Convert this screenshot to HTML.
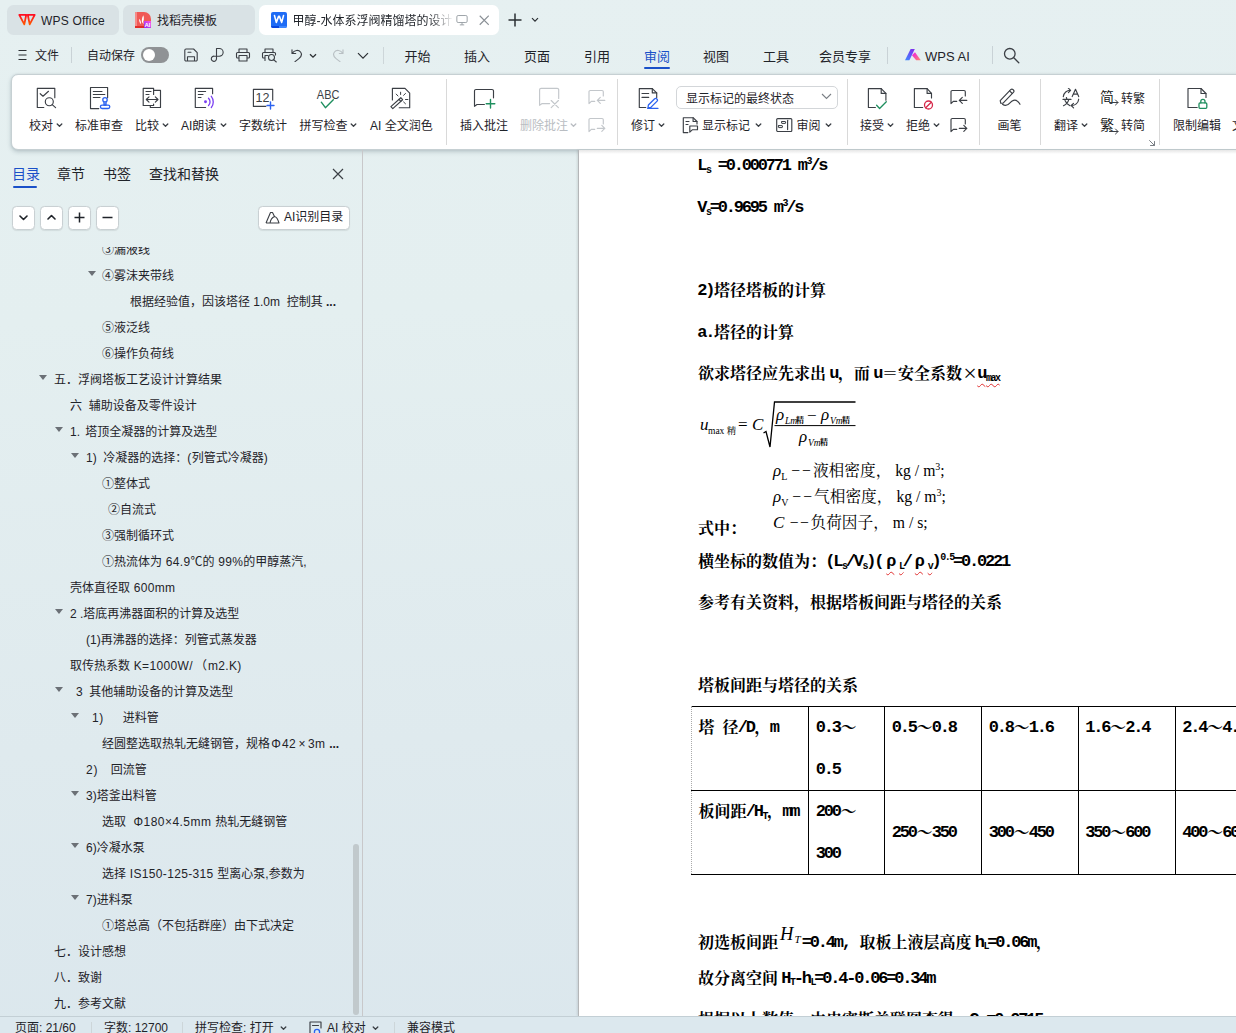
<!DOCTYPE html>
<html lang="zh-CN">
<head>
<meta charset="utf-8">
<title>甲醇-水体系浮阀精馏塔的设计</title>
<style>
*{box-sizing:border-box;margin:0;padding:0}
html,body{width:1236px;height:1033px;overflow:hidden;background:#e3eff1}
body{font-family:"Liberation Sans","Noto Sans CJK SC",sans-serif;font-size:12px;color:#1f2329;position:relative}
.abs{position:absolute}
#app{position:absolute;left:0;top:0;width:1236px;height:1033px;overflow:hidden;background:linear-gradient(178deg,#e6f0f1 0%,#e4eff0 30%,#dfeaee 70%,#dbe7ed 100%)}
/* tabs */
.tab{position:absolute;top:4.500px;height:30.500px;border-radius:6.500px;background:#d9e2e5;font-size:12px;line-height:30px;white-space:nowrap;overflow:hidden}
.tab.on{background:#fff}
/* menu */
.mi{position:absolute;top:46px;height:20px;line-height:20px;font-size:12px;white-space:nowrap}
.mt{position:absolute;top:45.500px;height:22px;line-height:22px;font-size:13px;white-space:nowrap}
/* ribbon */
#ribbon{position:absolute;left:11px;top:74px;width:1240px;height:76px;background:#fff;border:1px solid #c6d0d3;border-radius:7px;box-shadow:0 2px 4px rgba(90,110,120,.30),0 0 2px rgba(120,140,150,.2)}
.rl{position:absolute;top:117px;height:18px;line-height:18px;font-size:12px;white-space:nowrap;color:#1f2329}
.chev{position:absolute;fill:none;stroke:#3b3f45;stroke-width:1.3;stroke-linecap:round;stroke-linejoin:round}
.rsep{position:absolute;top:79px;height:66px;width:1px;background:#d9d9d9}
.ic{position:absolute;fill:none;stroke:#3b3f45;stroke-width:1.15;stroke-linecap:round;stroke-linejoin:round}
/* sidebar */
.stab{position:absolute;top:162.500px;height:22px;line-height:22px;font-size:14px;white-space:nowrap}
.sbtn{position:absolute;top:206px;width:23.500px;height:23.500px;background:#fff;border:1px solid #c9d0d3;border-radius:4.500px;box-shadow:0 .5px 1px rgba(0,0,0,.08)}
.ti{position:absolute;height:26px;line-height:26px;font-size:12px;white-space:pre;color:#1f2329}
.tri{position:absolute;width:0;height:0;border-left:4px solid transparent;border-right:4px solid transparent;border-top:5.500px solid #6b7076}
.la{letter-spacing:.350px}
.fwc{display:inline-block;width:12px;text-align:center}
/* doc */
#page{position:absolute;left:578px;top:150px;width:700px;height:866px;background:#fff;overflow:hidden;border-left:1px solid #b4b6b8;box-shadow:-1px 0 2px rgba(0,0,0,.10)}
#page>*{margin-left:0}
#page:before{content:"";position:absolute;left:0;top:0;width:100%;height:4px;background:linear-gradient(#e6e6e6,#fff)}
.dl{position:absolute;height:42px;line-height:42px;font-size:16px;font-weight:bold;white-space:pre;color:#000;font-family:"Liberation Serif","Noto Serif CJK SC",serif}
.l{font-family:"Liberation Mono","Noto Serif CJK SC",monospace;letter-spacing:-2.2px;font-size:17px;position:relative;left:-.8px;top:-1px}
.sb{font-family:"Liberation Mono",monospace;font-size:10px;letter-spacing:-1.5px;position:relative;top:1.500px}
.sp{font-family:"Liberation Mono",monospace;font-size:10px;letter-spacing:-1.5px;position:relative;top:-7px}
.fw{display:inline-block;width:16px;text-align:center;font-size:24px;line-height:20px;vertical-align:-2px;font-weight:normal}
.sq{text-decoration:underline wavy #e03030 1px;text-underline-offset:4px;text-decoration-skip-ink:none}
.fm{position:absolute;font-family:"Liberation Serif","Noto Serif CJK SC",serif;color:#000;line-height:20px;white-space:nowrap}
.fm .abs{line-height:20px}
.it,.wl i{font-style:italic}
.wl{position:absolute;height:26px;line-height:26px;font-size:15.700px;white-space:pre;color:#000;font-family:"Liberation Serif","Noto Serif CJK SC",serif}
.wl i{font-size:17px}
.wsb{font-size:10px;position:relative;top:4px}
.wsp{font-size:10px;position:relative;top:-6px}
.ht{font-family:"Liberation Serif",serif;font-weight:normal;font-size:18.500px;position:relative;top:-8px;margin:0 2px 0 2px}
.hts{font-size:11px;font-style:italic;position:relative;top:3.500px;margin-left:1px}
/* status */
#status{position:absolute;left:0;top:1016px;width:1236px;height:17px;background:#dce8ee;border-top:1px solid #c3cfd5}
.st{position:absolute;top:1019px;height:18px;line-height:18px;font-size:12px;white-space:nowrap}
</style>
</head>
<body>
<div id="app">
<!-- TABS -->
<div class="tab" style="left:7px;width:112px">
<svg class="abs" style="left:11px;top:8.500px" width="18" height="13" viewBox="0 0 18 13"><defs><linearGradient id="gw" x1="0" y1="0" x2="0" y2="1"><stop offset="0" stop-color="#ff0d22"/><stop offset="1" stop-color="#ff5a00"/></linearGradient></defs><path d="M1.300 1.900L6.300 11.400 8.200 1.900ZM16.700 1.900L11.700 11.400 9.800 1.900Z" fill="none" stroke="url(#gw)" stroke-width="1.800" stroke-linejoin="round"/></svg>
<span class="abs" style="left:34px;top:1px;letter-spacing:.200px">WPS Office</span></div>
<div class="tab" style="left:123px;width:132px">
<svg class="abs" style="left:12px;top:7.500px" width="16" height="16" viewBox="0 0 16 16"><defs><linearGradient id="gb" x1="0" y1="1" x2="1" y2="0"><stop offset="0" stop-color="#8a2cf0"/><stop offset="1" stop-color="#ff52e6"/></linearGradient></defs><path d="M0 0h9a7 7 0 0 1 7 7v9h-16z" fill="#f05956"/><rect width="2" height="16" fill="#f58b89"/><rect y="14" width="16" height="2" fill="#e22c29"/><path d="M8.300 3.200c1.100 2.600.600 5.800-.900 8.300-1-2.600-.600-5.700.900-8.300zM4.200 6.800c1.400 1.500 2 3.500 1.700 5.400-1.300-1.300-2-3.300-1.700-5.400zM7.800 12.300c.4-1.500 1.400-2.700 2.800-3.300" fill="#fff"/><rect x="9" y="9" width="7" height="7" fill="url(#gb)"/><text x="12.500" y="14.800" font-size="6" font-weight="bold" fill="#fff" text-anchor="middle" font-family="Liberation Sans,sans-serif">AI</text></svg>
<span class="abs" style="left:34px;top:1px">找稻壳模板</span></div>
<div class="tab on" style="left:259px;width:240px">
<svg class="abs" style="left:12px;top:7.500px" width="16" height="16" viewBox="0 0 16 16"><defs><clipPath id="cw"><rect width="16" height="16" rx="2"/></clipPath></defs><g clip-path="url(#cw)"><rect width="16" height="16" fill="#1f6cf5"/><rect y="14" width="8" height="2" fill="#0a47df"/><rect x="8" y="14" width="8" height="2" fill="#3d86ff"/></g><path d="M3.500 3.600l1.800 6.800 2.300-6h.8l2.300 6 1.800-6.800" fill="none" stroke="#fff" stroke-width="1.600" stroke-linejoin="round" stroke-linecap="round"/></svg>
<span class="abs" style="left:33.500px;top:1px;width:163px;overflow:hidden;-webkit-mask-image:linear-gradient(90deg,#000 136px,transparent 160px);mask-image:linear-gradient(90deg,#000 136px,transparent 160px)">甲醇-水体系浮阀精馏塔的设计计算</span>
<svg class="abs" style="left:196.500px;top:10.800px" width="12" height="10.500" viewBox="0 0 13 12"><rect x=".6" y=".6" width="11.800" height="8" rx="1.500" fill="none" stroke="#9aa0a6" stroke-width="1.100"/><path d="M4 11.300h5M6.500 8.600v2.700" stroke="#9aa0a6" stroke-width="1.100" fill="none"/></svg>
<svg class="abs" style="left:219.500px;top:10.800px" width="10.500" height="10.500" viewBox="0 0 10 10"><path d="M.7.7l8.600 8.600M9.300.7l-8.600 8.600" stroke="#8a9096" stroke-width="1.100" fill="none"/></svg>
</div>
<svg class="abs" style="left:508px;top:13px" width="14" height="14" viewBox="0 0 14 14"><path d="M7 .5v13M.5 7h13" stroke="#2b2f33" stroke-width="1.500" fill="none"/></svg>
<svg class="abs" style="left:531px;top:17px" width="8" height="6" viewBox="0 0 8 6"><path d="M1 1.200l3 3 3-3" stroke="#2b2f33" stroke-width="1.200" fill="none"/></svg>
<!-- MENU ROW -->
<svg class="abs" style="left:18px;top:49px" width="9" height="12" viewBox="0 0 9 12"><path d="M.5 1.500h8M.5 6h8M.5 10.500h8" stroke="#2b2f33" stroke-width="1.100" fill="none"/></svg>
<span class="mi" style="left:35px">文件</span>
<div class="abs" style="left:71px;top:47px;width:1px;height:16px;background:#c9d2d6"></div>
<span class="mi" style="left:87px">自动保存</span>
<div class="abs" style="left:141px;top:47px;width:28px;height:16px;border-radius:8px;background:#8f9295"><div class="abs" style="left:2px;top:2px;width:12px;height:12px;border-radius:6px;background:#fff"></div></div>
<!-- quick icons -->
<svg class="ic" style="left:183px;top:47px;stroke-width:1.100" width="16" height="16" viewBox="0 0 16 16"><path d="M1.800 3.200a1.200 1.200 0 0 1 1.200-1.200h7.600l3.600 3.600v7.200a1.200 1.200 0 0 1-1.200 1.200h-10a1.200 1.200 0 0 1-1.200-1.200zM4.500 14v-4.300h7v4.300M5 5.200h3"/></svg>
<svg class="ic" style="left:209px;top:47px;stroke-width:1.100" width="16" height="16" viewBox="0 0 16 16"><path d="M7.500 9.200v-7.700h2.800a3.850 3.850 0 0 1 0 7.700h-5a2.600 2.600 0 1 0 2.200 2.600v-2.600"/></svg>
<svg class="ic" style="left:235px;top:47px;stroke-width:1.100" width="16" height="16" viewBox="0 0 16 16"><path d="M4 5.500v-3.500h8v3.500M4 11h-1.500a1 1 0 0 1-1-1v-3.500a1 1 0 0 1 1-1h11a1 1 0 0 1 1 1v3.500a1 1 0 0 1-1 1h-1.500M4 8.500h8v5.500h-8z"/></svg>
<svg class="ic" style="left:261px;top:47px;stroke-width:1.100" width="17" height="16" viewBox="0 0 17 16"><path d="M4 5.500v-3.500h8v3.500M4 11h-1.500a1 1 0 0 1-1-1v-3.500a1 1 0 0 1 1-1h11a1 1 0 0 1 1 1v1.500M4 13.500v-5h3"/><circle cx="10.500" cy="10.500" r="3"/><path d="M12.800 12.800l2.500 2.200"/></svg>
<svg class="ic" style="left:290px;top:48px;stroke-width:1.150" width="14" height="14" viewBox="0 0 14 14"><path d="M2 1.800v3.700h3.700M2.300 5.300c2-3.300 6.300-3.800 8.200-1.300 1.800 2.400.5 5-1.600 6.600l-3.900 3"/></svg>
<svg class="abs" style="left:309px;top:53px" width="8" height="6" viewBox="0 0 8 6"><path d="M1 1.200l3 3 3-3" stroke="#2b2f33" stroke-width="1.300" fill="none"/></svg>
<svg class="ic" style="left:331px;top:48px;stroke:#b9c0c4;stroke-width:1.150" width="14" height="14" viewBox="0 0 14 14"><path d="M12 1.800v3.700h-3.700M11.700 5.300c-2-3.300-6.300-3.800-8.200-1.300-1.800 2.400-.5 5 1.600 6.600l3.900 3"/></svg>
<svg class="abs" style="left:357px;top:52px" width="12" height="8" viewBox="0 0 12 8"><path d="M1 1.200l5 5 5-5" stroke="#2b2f33" stroke-width="1.200" fill="none"/></svg>
<div class="abs" style="left:383px;top:47px;width:1px;height:17px;background:#cdd6d9"></div>
<span class="mt" style="left:404.500px">开始</span>
<span class="mt" style="left:464px">插入</span>
<span class="mt" style="left:524px">页面</span>
<span class="mt" style="left:584px">引用</span>
<span class="mt" style="left:644px;color:#1a50c8">审阅</span>
<div class="abs" style="left:644px;top:66.500px;width:26px;height:2px;border-radius:1px;background:#1a50c8"></div>
<span class="mt" style="left:703px">视图</span>
<span class="mt" style="left:763px">工具</span>
<span class="mt" style="left:819px">会员专享</span>
<div class="abs" style="left:887px;top:47px;width:1px;height:17px;background:#c9d2d6"></div>
<svg class="abs" style="left:905px;top:48.800px" width="17" height="12" viewBox="0 0 17 12"><defs><linearGradient id="g1" x1="0" y1="1" x2=".6" y2="0"><stop offset="0" stop-color="#3d8bff"/><stop offset="1" stop-color="#7a35f0"/></linearGradient><linearGradient id="g2" x1="0" y1="0" x2="1" y2="1"><stop offset="0" stop-color="#f018e8"/><stop offset="1" stop-color="#ff8a6a"/></linearGradient></defs><path d="M0 11.200h4.400l5.400-11.200h-4.200z" fill="url(#g1)"/><path d="M7 6.200l3-3 5.800 8h-4.600z" fill="url(#g2)"/></svg>
<span class="mt" style="left:925px">WPS AI</span>
<div class="abs" style="left:992px;top:46px;width:1px;height:18px;background:#c9d2d6"></div>
<svg class="ic" style="left:1003px;top:47px;stroke-width:1.300" width="17" height="17" viewBox="0 0 17 17"><circle cx="6.800" cy="6.800" r="5.300"/><path d="M10.800 10.800l5 5"/></svg>
<!-- RIBBON -->
<div id="ribbon"></div>
<!-- 校对 -->
<svg class="ic" style="left:36px;top:87px" width="22" height="22" viewBox="0 0 22 22"><path d="M18.800 10.700v-9.300h-17.500v19.100h6.500"/><path d="M4.200 6.700l2.800 2.500 5.500-4.900"/><circle cx="13.300" cy="14.700" r="4"/><path d="M16.200 17.600l3.400 3"/></svg>
<span class="rl" style="left:29px">校对</span><svg class="chev" style="left:56px;top:123px" width="7" height="5" viewBox="0 0 7 5"><path d="M1.200 1l2.300 2.300 2.300-2.300"/></svg>
<!-- 标准审查 -->
<svg class="ic" style="left:89px;top:86px" width="23" height="24" viewBox="0 0 23 24"><path d="M18.600 11.700v-10.200h-17.100v21.100h8.300"/><path d="M4.300 5.500h8.700M4.300 8.500h11.500M4.300 11.500h6.700"/><g stroke="#2b62f0" stroke-width="1.300"><circle cx="16" cy="13.800" r="2.200"/><path d="M15 15.800v3.400h2v-3.400" fill="#9db6f5"/><rect x="11.400" y="19.200" width="9.400" height="3.300" rx="1.650"/></g></svg>
<span class="rl" style="left:75px">标准审查</span>
<!-- 比较 -->
<svg class="ic" style="left:142px;top:87px" width="21" height="22" viewBox="0 0 21 22"><path d="M11.600 7.400v-6h-10.400v17.100h10.400v-1.500"/><path d="M11.600 3.400h6.900v17.100h-10.200v-2"/><path d="M4 4.500h5M4 7.500h3"/><path d="M4.300 12.500h11.700M7 9.800l-2.700 2.700 2.700 2.700M13.300 9.800l2.700 2.700-2.700 2.700"/></svg>
<span class="rl" style="left:135px">比较</span><svg class="chev" style="left:162px;top:123px" width="7" height="5" viewBox="0 0 7 5"><path d="M1.200 1l2.300 2.300 2.300-2.300"/></svg>
<!-- AI朗读 -->
<svg class="ic" style="left:194px;top:87px" width="23" height="22" viewBox="0 0 23 22"><path d="M18.600 6.700v-5.300h-17.300v19.100h10.300"/><path d="M4.300 4.500h7.300M4.300 7.500h4.700M4.300 10.500h2.700"/><g stroke="#7a3ff2" stroke-width="1.300"><circle cx="11.500" cy="14.700" r=".8" fill="#7a3ff2"/><path d="M14.500 11.300a5 5 0 0 1 0 7.200M17.300 9.300a9 9 0 0 1 0 11.200"/></g></svg>
<span class="rl" style="left:181px">AI朗读</span><svg class="chev" style="left:220px;top:123px" width="7" height="5" viewBox="0 0 7 5"><path d="M1.200 1l2.300 2.300 2.300-2.300"/></svg>
<!-- 字数统计 -->
<svg class="ic" style="left:252px;top:88px" width="24" height="22" viewBox="0 0 24 22"><path d="M20.700 12.200v-10.900h-19.300v17.100h12.400"/><g stroke="#2b62f0" stroke-width="1.400"><path d="M18.500 14v7M15 17.500h7"/></g><text x="3.400" y="13.800" font-size="13" stroke="none" fill="#3b3f45" font-family="Liberation Sans,sans-serif" textLength="14" lengthAdjust="spacingAndGlyphs">12</text></svg>
<span class="rl" style="left:239px">字数统计</span>
<!-- 拼写检查 -->
<svg class="ic" style="left:314px;top:86px" width="28" height="24" viewBox="0 0 28 24"><text x="14.100" y="12.700" font-size="13.500" text-anchor="middle" stroke="none" fill="#3b3f45" font-family="Liberation Sans,sans-serif" textLength="22.500" lengthAdjust="spacingAndGlyphs">ABC</text><path d="M7.300 16.200l4.100 5.500 7.900-7.900" stroke="#1f8f5f" stroke-width="1.400"/></svg>
<span class="rl" style="left:299.500px">拼写检查</span><svg class="chev" style="left:350px;top:123px" width="7" height="5" viewBox="0 0 7 5"><path d="M1.200 1l2.300 2.300 2.300-2.300"/></svg>
<!-- AI 全文润色 -->
<svg class="ic" style="left:389px;top:86px" width="24" height="24" viewBox="0 0 24 24"><path d="M3.400 14v-11.700h12.600l4.700 4.900v14.500h-10.500"/><path d="M1.900 20.600l9.900-8.900 1.800 2-9.800 8.900z"/><path d="M10 13.400l1.800 2"/><path d="M11.600 6.200v2.300M7.200 8.100l1.800 1.900M14.600 9.300l1.900-1.800M16.500 13.500h2.400M14.600 16l1.900 1.800" stroke-width="1"/></svg>
<span class="rl" style="left:370px">AI 全文润色</span>
<div class="rsep" style="left:446px"></div>
<!-- 插入批注 -->
<svg class="ic" style="left:473px;top:88px" width="24" height="22" viewBox="0 0 24 22"><path d="M20.500 9.800v-6.800a1.500 1.500 0 0 0-1.500-1.500h-16a1.500 1.500 0 0 0-1.500 1.500v15.300l2.500-1.800h7.400"/><g stroke="#1f8f5f" stroke-width="1.400"><path d="M17.500 11.500v8.600M13.200 15.800h8.600"/></g></svg>
<span class="rl" style="left:460px">插入批注</span>
<!-- 删除批注 -->
<svg class="ic" style="left:538px;top:87px;stroke:#c3c7cb" width="24" height="22" viewBox="0 0 24 22"><path d="M20.700 11.400v-8.600a1.500 1.500 0 0 0-1.500-1.500h-16.100a1.500 1.500 0 0 0-1.500 1.500v15.500l2.500-1.700h7.500"/><path d="M13.200 13.500l7.200 7.200M20.400 13.500l-7.200 7.200"/></svg>
<span class="rl" style="left:520px;color:#b9bdc2">删除批注</span><svg class="chev" style="left:570px;top:123px;stroke:#b9bdc2" width="7" height="5" viewBox="0 0 7 5"><path d="M1.200 1l2.300 2.300 2.300-2.300"/></svg>
<svg class="ic" style="left:588px;top:89px;stroke:#c3c7cb" width="18" height="16" viewBox="0 0 18 16"><path d="M15.300 7v-4.200a1.300 1.300 0 0 0-1.300-1.300h-11.700a1.300 1.300 0 0 0-1.300 1.300v11.800l2.300-2.200h3.400"/><path d="M16.800 11.400h-7.500M12.300 8.400l-3 3 3 3"/></svg>
<svg class="ic" style="left:588px;top:117px;stroke:#c3c7cb" width="18" height="16" viewBox="0 0 18 16"><path d="M15.300 7v-4.200a1.300 1.300 0 0 0-1.300-1.300h-11.700a1.300 1.300 0 0 0-1.300 1.300v11.800l2.300-2.200h3.400"/><path d="M9.300 11.400h7.500M13.800 8.400l3 3-3 3"/></svg>
<div class="rsep" style="left:617px"></div>
<!-- 修订 -->
<svg class="ic" style="left:638px;top:87px" width="24" height="23" viewBox="0 0 24 23"><path d="M18.700 10.700v-4.800l-4.400-4.300h-13v18.900h6.500"/><path d="M14.300 1.600v4.300h4.400"/><path d="M4 6.500h6.700M4 10.400h6.700"/><g stroke="#2b62f0" stroke-width="1.300"><path d="M10 20.600l.4-2.600 6.300-6.300a1.300 1.300 0 0 1 1.900 0l.5.500a1.300 1.300 0 0 1 0 1.900l-6.300 6.300zM9.600 21.300h10.400"/></g></svg>
<span class="rl" style="left:631px">修订</span><svg class="chev" style="left:658px;top:123px" width="7" height="5" viewBox="0 0 7 5"><path d="M1.200 1l2.300 2.300 2.300-2.300"/></svg>
<!-- dropdown -->
<div class="abs" style="left:676px;top:85.500px;width:162px;height:23px;border:1px solid #d3d6d9;border-radius:5px;background:#fff"></div>
<span class="rl" style="left:686px;top:89.500px">显示标记的最终状态</span>
<svg class="abs" style="left:821px;top:93px" width="11" height="7" viewBox="0 0 11 7"><path d="M1 1l4.500 4.500 4.500-4.500" stroke="#7a7f85" stroke-width="1.100" fill="none"/></svg>
<!-- 显示标记 -->
<svg class="ic" style="left:682px;top:116px" width="17" height="18" viewBox="0 0 17 18"><path d="M15 8v-2.500l-3.900-3.800h-9.800v14.900h4.600"/><path d="M11.100 1.700v3.800h3.900"/><path d="M4 5.500h3M4 8.500h2"/><path d="M7.800 10h7.700v3.700h-5l-2.700 2.500z"/></svg>
<span class="rl" style="left:702px">显示标记</span><svg class="chev" style="left:755px;top:123px" width="7" height="5" viewBox="0 0 7 5"><path d="M1.200 1l2.300 2.300 2.300-2.300"/></svg>
<!-- 审阅 -->
<svg class="ic" style="left:776px;top:118px" width="17" height="14" viewBox="0 0 17 14"><rect x=".7" y=".6" width="15.100" height="12.900" rx="1"/><path d="M11.600 2.200v9.400"/><rect x="5.600" y="3.500" width="4" height="1.900" rx=".4" stroke-width="1"/><rect x="2.400" y="7.600" width="4" height="2" rx=".4" stroke-width="1"/></svg>
<span class="rl" style="left:796.500px">审阅</span><svg class="chev" style="left:825px;top:123px" width="7" height="5" viewBox="0 0 7 5"><path d="M1.200 1l2.300 2.300 2.300-2.300"/></svg>
<div class="rsep" style="left:847px"></div>
<!-- 接受 -->
<svg class="ic" style="left:867px;top:87px" width="22" height="23" viewBox="0 0 22 23"><path d="M18.900 13.200v-6.800l-4.700-4.800h-12.800v18.900h7"/><path d="M14.200 1.600v4.800h4.700"/><path d="M9.600 18.300l3 3.200 6.700-6.800" stroke="#1f8f5f" stroke-width="1.300"/></svg>
<span class="rl" style="left:860px">接受</span><svg class="chev" style="left:887px;top:123px" width="7" height="5" viewBox="0 0 7 5"><path d="M1.200 1l2.300 2.300 2.300-2.300"/></svg>
<!-- 拒绝 -->
<svg class="ic" style="left:913px;top:87px" width="23" height="23" viewBox="0 0 23 23"><path d="M18.500 11v-4.600l-4.400-4.800h-12.700v18.900h8.300"/><path d="M14.100 1.600v4.800h4.400"/><g stroke="#d6284a" stroke-width="1.300"><circle cx="15.500" cy="18" r="4"/><path d="M12.700 20.800l5.600-5.600"/></g></svg>
<span class="rl" style="left:906px">拒绝</span><svg class="chev" style="left:933px;top:123px" width="7" height="5" viewBox="0 0 7 5"><path d="M1.200 1l2.300 2.300 2.300-2.300"/></svg>
<svg class="ic" style="left:950px;top:89px" width="18" height="16" viewBox="0 0 18 16"><path d="M15.300 7v-4.200a1.300 1.300 0 0 0-1.300-1.300h-11.700a1.300 1.300 0 0 0-1.300 1.300v11.800l2.300-2.200h3.400"/><path d="M16.800 11.400h-7.500M12.300 8.400l-3 3 3 3"/></svg>
<svg class="ic" style="left:950px;top:117px" width="18" height="16" viewBox="0 0 18 16"><path d="M15.300 7v-4.200a1.300 1.300 0 0 0-1.300-1.300h-11.700a1.300 1.300 0 0 0-1.300 1.300v11.800l2.300-2.200h3.400"/><path d="M9.300 11.400h7.500M13.800 8.400l3 3-3 3"/></svg>
<div class="rsep" style="left:979px"></div>
<!-- 画笔 -->
<svg class="ic" style="left:996px;top:88px" width="27" height="22" viewBox="0 0 27 22"><path d="M4.800 15.300l-.6-2.600 10.500-11a1.700 1.700 0 0 1 2.400 0l.3.300a1.700 1.700 0 0 1 0 2.400l-10.300 10.700z"/><path d="M13.600 2.800l2.700 2.700"/><path d="M6.500 16.300c2.500 1.800 5.500.8 7.500-1.500s5-3.800 7.500-1.500q1.500 1.200 2.500 3"/></svg>
<span class="rl" style="left:997.500px">画笔</span>
<div class="rsep" style="left:1040px"></div>
<!-- 翻译 -->
<svg class="ic" style="left:1061px;top:88px" width="20" height="22" viewBox="0 0 20 22"><path d="M2.300 8.600a7 7 0 0 1 7.300-6.300M7.400.2l2.200 2.100-2.200 2.300"/><path d="M11.200 8.600l3.300-7.300 3.200 7.300M12.300 6.100h4.400"/><path d="M5.400 9.500l.4 1.200M2 11.400h8M7.800 11.600c-.8 2.900-2.800 4.900-5.300 6.100M4 12.500c1 2.500 3 4.300 5 5.200"/><path d="M17.700 11.200a7 7 0 0 1-7.500 6.300M12.500 15.400l-2.300 2.100 2.400 2.300"/></svg>
<span class="rl" style="left:1054px">翻译</span><svg class="chev" style="left:1081px;top:123px" width="7" height="5" viewBox="0 0 7 5"><path d="M1.200 1l2.300 2.300 2.300-2.300"/></svg>
<!-- 简转繁 -->
<span class="rl" style="left:1100px;top:87.500px;font-size:14px;color:#111;font-weight:350">简</span><svg class="ic" style="left:1109px;top:99px;stroke-width:1" width="10" height="7" viewBox="0 0 10 7"><path d="M.5 3.500h8.500M6.500 1l2.500 2.500-2.500 2.500"/></svg>
<span class="rl" style="left:1121px;top:89.500px">转繁</span>
<span class="rl" style="left:1100px;top:116px;font-size:14px;color:#111;font-weight:350">繁</span><svg class="ic" style="left:1109px;top:127.500px;stroke-width:1" width="10" height="7" viewBox="0 0 10 7"><path d="M.5 3.500h8.500M6.500 1l2.500 2.500-2.500 2.500"/></svg>
<span class="rl" style="left:1121px;top:117px">转简</span>
<svg class="ic" style="left:1149px;top:140px;stroke:#7a7f85;stroke-width:1" width="6" height="6" viewBox="0 0 6 6"><path d="M.5.500l5 5M5.500 1.500v4h-4"/></svg>
<div class="rsep" style="left:1159px"></div>
<!-- 限制编辑 -->
<svg class="ic" style="left:1187px;top:87px" width="23" height="23" viewBox="0 0 23 23"><path d="M19 10.500v-4l-5-5h-13v19h9.200"/><path d="M14 1.500v5h5"/><g stroke="#1f8f5f" stroke-width="1.300"><rect x="12" y="15.900" width="7.800" height="5.400" rx="1"/><path d="M13.800 15.900v-1.500a2.100 2.100 0 0 1 4.200 0v1.500"/></g></svg>
<span class="rl" style="left:1173px">限制编辑</span>
<span class="rl" style="left:1232px">文档权限</span>
<!-- SIDEBAR -->
<div class="abs" style="left:362px;top:150px;width:1px;height:868px;background:#c8c8ca"></div>
<span class="stab" style="left:12px;color:#1a50c8">目录</span>
<div class="abs" style="left:13px;top:185.500px;width:24px;height:2.500px;border-radius:1.200px;background:#1a50c8"></div>
<span class="stab" style="left:57px">章节</span>
<span class="stab" style="left:103px">书签</span>
<span class="stab" style="left:149px">查找和替换</span>
<svg class="abs" style="left:332px;top:168px" width="12" height="12" viewBox="0 0 12 12"><path d="M1 1l10 10M11 1l-10 10" stroke="#3b3f45" stroke-width="1.200" fill="none"/></svg>
<div class="sbtn" style="left:11.5px"><svg class="abs" style="left:6px;top:8px" width="9" height="6" viewBox="0 0 9 6"><path d="M1 1l3.500 3.500 3.500-3.500" stroke="#1f2329" stroke-width="1.600" fill="none" stroke-linecap="round" stroke-linejoin="round"/></svg></div>
<div class="sbtn" style="left:39.5px"><svg class="abs" style="left:6px;top:7px" width="9" height="6" viewBox="0 0 9 6"><path d="M1 5l3.500-3.500 3.500 3.500" stroke="#1f2329" stroke-width="1.600" fill="none" stroke-linecap="round" stroke-linejoin="round"/></svg></div>
<div class="sbtn" style="left:67.5px"><svg class="abs" style="left:5px;top:5px" width="11" height="11" viewBox="0 0 11 11"><path d="M5.500 .5v10M.5 5.500h10" stroke="#1f2329" stroke-width="1.500" fill="none"/></svg></div>
<div class="sbtn" style="left:95.5px"><svg class="abs" style="left:5px;top:5px" width="11" height="11" viewBox="0 0 11 11"><path d="M.5 5.500h10" stroke="#1f2329" stroke-width="1.500" fill="none"/></svg></div>
<div class="sbtn" style="left:258px;width:92px"><svg class="abs" style="left:6px;top:4px" width="15" height="13" viewBox="0 0 15 13"><path d="M1 12l4.500-10.500h2l2 4M9.500 5.500c2 .5 3.500 3 4.500 6.500h-13M5 12c.5-3 2-5.500 4.500-6.500" stroke="#3b3f45" stroke-width="1.100" fill="none" stroke-linejoin="round"/></svg><span class="abs" style="left:25px;top:0;line-height:21px;font-size:12px;white-space:nowrap">AI识别目录</span></div>
<div class="abs" style="left:0;top:246.500px;width:352px;height:769.500px;overflow:hidden">
<span class="ti" style="left:102px;top:-10.0px">③漏液线</span>
<span class="ti" style="left:102px;top:16.0px">④雾沫夹带线</span>
<i class="tri" style="left:88px;top:24.2px"></i>
<span class="ti" style="left:130px;top:42.0px">根据经验值，因该塔径 1.0m  控制其 <b>...</b></span>
<span class="ti" style="left:102px;top:68.0px">⑤液泛线</span>
<span class="ti" style="left:102px;top:94.0px">⑥操作负荷线</span>
<span class="ti" style="left:54px;top:120.0px">五．浮阀塔板工艺设计计算结果</span>
<i class="tri" style="left:39px;top:128.2px"></i>
<span class="ti" style="left:70px;top:146.0px">六  辅助设备及零件设计</span>
<span class="ti" style="left:70px;top:172.0px">1.<span style="display:inline-block;width:5.300px"></span>塔顶全凝器的计算及选型</span>
<i class="tri" style="left:55px;top:180.2px"></i>
<span class="ti" style="left:86px;top:198.0px">1)  冷凝器的选择：<span class="la">(</span>列管式冷凝器<span class="la">)</span></span>
<i class="tri" style="left:71px;top:206.2px"></i>
<span class="ti" style="left:102px;top:224.0px">①整体式</span>
<span class="ti" style="left:108px;top:250.0px">②自流式</span>
<span class="ti" style="left:102px;top:276.0px">③强制循环式</span>
<span class="ti" style="left:102px;top:302.0px">①热流体为<span class="la"> 64.9</span>℃的<span class="la"> 99%</span>的甲醇蒸汽,</span>
<span class="ti" style="left:70px;top:328.0px">壳体直径取<span class="la"> 600mm</span></span>
<span class="ti" style="left:70px;top:354.0px">2 .塔底再沸器面积的计算及选型</span>
<i class="tri" style="left:55px;top:362.2px"></i>
<span class="ti" style="left:86px;top:380.0px">(1)再沸器的选择：列管式蒸发器</span>
<span class="ti" style="left:70px;top:406.0px">取传热系数<span class="la"> K=1000W/</span><span style="margin:0 1px 0 2px">（</span><span class="la">m2.K)</span></span>
<span class="ti" style="left:76px;top:432.0px">3  其他辅助设备的计算及选型</span>
<i class="tri" style="left:55px;top:440.2px"></i>
<span class="ti" style="left:92px;top:458.0px"><span class="la" style="letter-spacing:.500px">1)     </span>进料管</span>
<i class="tri" style="left:71px;top:466.2px"></i>
<span class="ti" style="left:102px;top:484.0px">经圆整选取热轧无缝钢管，规格<span class="fwc">Φ</span><span class="la">42</span><span class="fwc">×</span><span class="la">3m </span><b>...</b></span>
<span class="ti" style="left:86px;top:510.0px"><span class="la" style="letter-spacing:.800px">2)   </span>回流管</span>
<span class="ti" style="left:86px;top:536.0px">3)塔釜出料管</span>
<i class="tri" style="left:71px;top:544.2px"></i>
<span class="ti" style="left:102px;top:562.0px">选取<span class="la" style="letter-spacing:.450px">  Φ180×4.5mm </span>热轧无缝钢管</span>
<span class="ti" style="left:86px;top:588.0px">6)冷凝水泵</span>
<i class="tri" style="left:71px;top:596.2px"></i>
<span class="ti" style="left:102px;top:614.0px">选择<span class="la"> IS150-125-315 </span>型离心泵,参数为</span>
<span class="ti" style="left:86px;top:640.0px">7)进料泵</span>
<i class="tri" style="left:71px;top:648.2px"></i>
<span class="ti" style="left:102px;top:666.0px">①塔总高（不包括群座）由下式决定</span>
<span class="ti" style="left:54px;top:692.0px">七．设计感想</span>
<span class="ti" style="left:54px;top:718.0px">八．致谢</span>
<span class="ti" style="left:54px;top:744.0px">九．参考文献</span>
</div>
<div class="abs" style="left:353px;top:844px;width:6px;height:171px;border-radius:3px;background:#c1c9cc"></div>
<!-- PAGE -->
<div id="page">
<div class="dl" style="left:119px;top:-5px;"><span class="l">L</span><span class="sb">s</span><span class="l"> =0.000771 m</span><span class="sp">3</span><span class="l">/s</span></div>
<div class="dl" style="left:119px;top:37px;"><span class="l">V</span><span class="sb">s</span><span class="l">=0.9695 m</span><span class="sp">3</span><span class="l">/s</span></div>
<div class="dl" style="left:119px;top:120px;"><span class="l">2)</span>塔径塔板的计算</div>
<div class="dl" style="left:119px;top:162px;"><span class="l">a.</span>塔径的计算</div>
<div class="dl" style="left:119px;top:203px;">欲求塔径应先求出<span style="margin-left:4px"></span><span class="l">u</span>，而<span style="margin-left:4px"></span><span class="l">u</span>＝安全系数<span class="fw">×</span><span class="sq"><span class="l">u</span><span class="sb">max</span></span></div>
<div class="fm" style="left:121px;top:250px;width:160px;height:50px">
<span class="abs it" style="left:0;top:15px;font-size:17px">u</span><span class="abs" style="left:8px;top:21px;font-size:9.500px">max 精</span>
<span class="abs" style="left:38px;top:15px;font-size:17px">=</span><span class="abs it" style="left:52px;top:15px;font-size:17px">C</span>
<svg class="abs" style="left:62px;top:0" width="94" height="50" viewBox="0 0 94 50"><path d="M1.500 33l2.500-1.500 4 15.500 4.500-45h81" fill="none" stroke="#000" stroke-width="1.300"/><path d="M12.500 25.600h81" stroke="#000" stroke-width="1"/></svg>
<span class="abs it" style="left:76px;top:5px;font-size:17px">ρ</span><span class="abs it" style="left:85px;top:11px;font-size:9.500px">Lm</span><span class="abs" style="left:96px;top:11px;font-size:8px;font-weight:bold">精</span>
<span class="abs" style="left:107px;top:6px;font-size:17px">−</span>
<span class="abs it" style="left:121px;top:5px;font-size:17px">ρ</span><span class="abs it" style="left:130px;top:11px;font-size:9.500px">Vm</span><span class="abs" style="left:142px;top:11px;font-size:8px;font-weight:bold">精</span>
<span class="abs it" style="left:99px;top:27px;font-size:17px">ρ</span><span class="abs it" style="left:108px;top:33px;font-size:9.500px">Vm</span><span class="abs" style="left:120px;top:33px;font-size:8px;font-weight:bold">精</span>
</div>
<div class="wl" style="left:194px;top:308px"><i>ρ</i><span class="wsb">L</span> <span style="letter-spacing:2px">−−</span>液相密度， kg / m<span class="wsp">3</span>;</div>
<div class="wl" style="left:194px;top:334px"><i>ρ</i><span class="wsb">V</span> <span style="letter-spacing:2px">−−</span>气相密度， kg / m<span class="wsp">3</span>;</div>
<div class="wl" style="left:194px;top:360px"><i>C</i><span style="letter-spacing:1.500px"> −−</span>负荷因子， m / s;</div>
<div class="dl" style="left:119px;top:358px;">式中：</div>
<div class="dl" style="left:119px;top:391px;">横坐标的数值为：<span class="l">(L</span><span class="sb">s</span><span class="l">/V</span><span class="sb">s</span><span class="l">)(</span><span class="sq"><span class="l" style="padding:0 4px">ρ</span><span class="sb">L</span></span><span class="l">/</span><span class="sq"><span class="l" style="padding:0 4px">ρ</span><span class="sb">v</span></span><span class="l">)</span><span class="sp">0.5</span><span class="l">=0.0221</span></div>
<div class="dl" style="left:119px;top:431.6px;">参考有关资料，根据塔板间距与塔径的关系</div>
<div class="dl" style="left:119px;top:515px;">塔板间距与塔径的关系</div>
<div class="abs" style="left:112px;top:556px;width:600px;height:1px;background:#000"></div>
<div class="abs" style="left:112px;top:640px;width:600px;height:1px;background:#000"></div>
<div class="abs" style="left:112px;top:724px;width:600px;height:1px;background:#000"></div>
<div class="abs" style="left:112px;top:556px;width:0;height:168px;border-left:1px dotted #aaa"></div>
<div class="abs" style="left:229px;top:556px;width:1px;height:169px;background:#000"></div>
<div class="abs" style="left:305px;top:556px;width:1px;height:169px;background:#000"></div>
<div class="abs" style="left:402px;top:556px;width:1px;height:169px;background:#000"></div>
<div class="abs" style="left:499px;top:556px;width:1px;height:169px;background:#000"></div>
<div class="abs" style="left:596px;top:556px;width:1px;height:169px;background:#000"></div>
<div class="dl" style="left:119.5px;top:557.0px;">塔<span class="l"> </span>径<span class="l">/D</span>，<span class="l">m</span></div>
<div class="dl" style="left:237.5px;top:557.0px;"><span class="l">0.3</span>～</div>
<div class="dl" style="left:237.5px;top:598.5px;"><span class="l">0.5</span></div>
<div class="dl" style="left:313.5px;top:557.0px;"><span class="l">0.5</span>～<span class="l">0.8</span></div>
<div class="dl" style="left:410.5px;top:557.0px;"><span class="l">0.8</span>～<span class="l">1.6</span></div>
<div class="dl" style="left:507px;top:557.0px;"><span class="l">1.6</span>～<span class="l">2.4</span></div>
<div class="dl" style="left:604px;top:557.0px;"><span class="l">2.4</span>～<span class="l">4.0</span></div>
<div class="dl" style="left:119.5px;top:641.0px;">板间距<span class="l">/H</span><span class="sb">T</span>，<span class="l">mm</span></div>
<div class="dl" style="left:237.5px;top:641.0px;"><span class="l">200</span>～</div>
<div class="dl" style="left:237.5px;top:682.5px;"><span class="l">300</span></div>
<div class="dl" style="left:313.5px;top:661.5px;"><span class="l">250</span>～<span class="l">350</span></div>
<div class="dl" style="left:410.5px;top:661.5px;"><span class="l">300</span>～<span class="l">450</span></div>
<div class="dl" style="left:507px;top:661.5px;"><span class="l">350</span>～<span class="l">600</span></div>
<div class="dl" style="left:604px;top:661.5px;"><span class="l">400</span>～<span class="l">600</span></div>
<div class="dl" style="left:119px;top:770.7px;">初选板间距<span class="ht"><i>H</i><span class="hts">T</span></span><span class="l">=0.4m,</span><span style="margin-left:9px"></span>取板上液层高度<span style="margin-left:4px"></span><span class="l">h</span><span class="sb">L</span><span class="l">=0.06m</span>，</div>
<div class="dl" style="left:119px;top:807.6px;">故分离空间<span style="margin-left:4px"></span><span class="l">H</span><span class="sb">T</span><span class="l">-h</span><span class="sb">L</span><span class="l">=0.4-0.06=0.34m</span></div>
<div class="dl" style="left:119px;top:849.2px;">根据以上数值，由史密斯关联图查得，<span class="l">C</span><span class="sb">20</span><span class="l">=0.0715</span></div>
</div>
<!-- STATUS -->
<div id="status"></div>
<span class="st" style="left:15px">页面: 21/60</span>
<div class="abs" style="left:91px;top:1022px;width:1px;height:11px;background:#cdd6d9"></div>
<span class="st" style="left:104px">字数: 12700</span>
<div class="abs" style="left:182px;top:1022px;width:1px;height:11px;background:#cdd6d9"></div>
<span class="st" style="left:195px">拼写检查: 打开</span>
<svg class="chev" style="left:280px;top:1026px" width="7" height="5" viewBox="0 0 7 5"><path d="M1.200 1l2.300 2.300 2.300-2.300"/></svg>
<svg class="ic" style="left:309px;top:1021px" width="14" height="14" viewBox="0 0 14 14"><path d="M4 12.500h-3v-11.500h11v6"/><path d="M3.500 4.500h6"/><circle cx="8" cy="11" r="2.600" stroke="#2b62f0" stroke-width="1.300"/></svg>
<span class="st" style="left:327px">AI 校对</span>
<svg class="chev" style="left:372px;top:1026px" width="7" height="5" viewBox="0 0 7 5"><path d="M1.200 1l2.300 2.300 2.300-2.300"/></svg>
<div class="abs" style="left:394px;top:1022px;width:1px;height:11px;background:#cdd6d9"></div>
<span class="st" style="left:407px">兼容模式</span>
</div>
</body>
</html>
